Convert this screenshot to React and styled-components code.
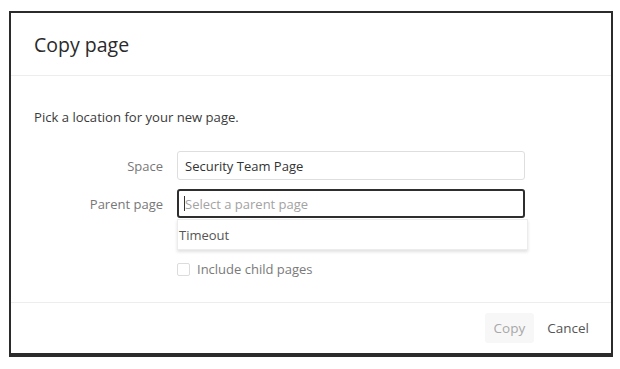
import React from 'react'
import styled, { createGlobalStyle } from 'styled-components'

const GlobalStyle = createGlobalStyle`
  html, body {
    margin: 0;
    padding: 0;
    background: #fff;
  }
  body {
    font-family: 'Open Sans', 'Noto Sans', sans-serif;
  }
`

const Page = styled.div`
  width: 620px;
  height: 369px;
  box-sizing: border-box;
  padding: 11px 7px 12px 9px;
  background: #fff;
`

const Dialog = styled.div`
  height: 100%;
  box-sizing: border-box;
  border: 2px solid #2b2b2b;
  border-bottom-width: 4px;
  background: #fff;
  display: flex;
  flex-direction: column;
`

const Header = styled.header`
  height: 62px;
  display: flex;
  align-items: center;
  padding: 0 23px;
  border-bottom: 1px solid #ededed;
`

const Title = styled.h2`
  margin: 0;
  font-size: 19.5px;
  font-weight: 400;
  color: #2a2a2a;
  letter-spacing: 0;
`

const Body = styled.div`
  flex: 1;
  padding: 32px 23px 0;
`

const Intro = styled.p`
  margin: 0 0 25px;
  font-size: 13.1px;
  line-height: 18px;
  color: #3a3a3a;
`

const Row = styled.div`
  display: grid;
  grid-template-columns: 129px 348px;
  column-gap: 14px;
  align-items: center;
  margin-bottom: ${p => p.gap || 0}px;
`

const Label = styled.label`
  text-align: right;
  font-size: 13px;
  color: #777;
`

const Field = styled.div`
  position: relative;
`

const Input = styled.div`
  height: 29px;
  box-sizing: border-box;
  display: flex;
  align-items: center;
  padding: 0 7px;
  font-size: 13px;
  color: ${p => (p.placeholder ? '#a3a3a3' : '#333')};
  border: ${p => (p.focused ? '2px solid #2e2e2e' : '1px solid #dedede')};
  border-radius: 3px;
  padding-left: ${p => (p.focused ? '5px' : '7px')};
`

const Caret = styled.span`
  width: 1px;
  height: 15px;
  background: #333;
`

const Menu = styled.div`
  position: absolute;
  top: 30px;
  left: 0;
  width: 351px;
  height: 31px;
  box-sizing: border-box;
  background: #fff;
  border: 1px solid #ececec;
  box-shadow: 0 2px 3px rgba(0, 0, 0, 0.12);
  display: flex;
  align-items: center;
  padding: 0 1px;
  font-size: 13px;
  color: #555;
`

const CheckRow = styled.div`
  margin: 42px 0 0 143px;
  display: flex;
  align-items: center;
  gap: 7px;
  font-size: 13px;
  color: #7a7a7a;
`

const Box = styled.span`
  width: 11px;
  height: 11px;
  border: 1px solid #dcdcdc;
  border-radius: 2px;
`

const Footer = styled.footer`
  height: 50px;
  border-top: 1px solid #ededed;
  display: flex;
  align-items: center;
  justify-content: flex-end;
  padding: 0 13px 0 0;
  gap: 4px;
`

const Button = styled.button`
  font-family: inherit;
  font-size: 13.5px;
  height: 30px;
  padding: 0 9px;
  border: none;
  border-radius: 3px;
  background: ${p => (p.disabled ? '#f7f7f7' : 'transparent')};
  color: ${p => (p.disabled ? '#a8a8a8' : '#555')};
`

export default function App() {
  return (
    <>
      <GlobalStyle />
      <Page>
        <Dialog>
          <Header>
            <Title>Copy page</Title>
          </Header>
          <Body>
            <Intro>Pick a location for your new page.</Intro>
            <Row gap={9}>
              <Label>Space</Label>
              <Input>Security Team Page</Input>
            </Row>
            <Row>
              <Label>Parent page</Label>
              <Field>
                <Input focused placeholder>
                  <Caret />
                  Select a parent page
                </Input>
                <Menu>Timeout</Menu>
              </Field>
            </Row>
            <CheckRow>
              <Box />
              Include child pages
            </CheckRow>
          </Body>
          <Footer>
            <Button disabled>Copy</Button>
            <Button>Cancel</Button>
          </Footer>
        </Dialog>
      </Page>
    </>
  )
}
